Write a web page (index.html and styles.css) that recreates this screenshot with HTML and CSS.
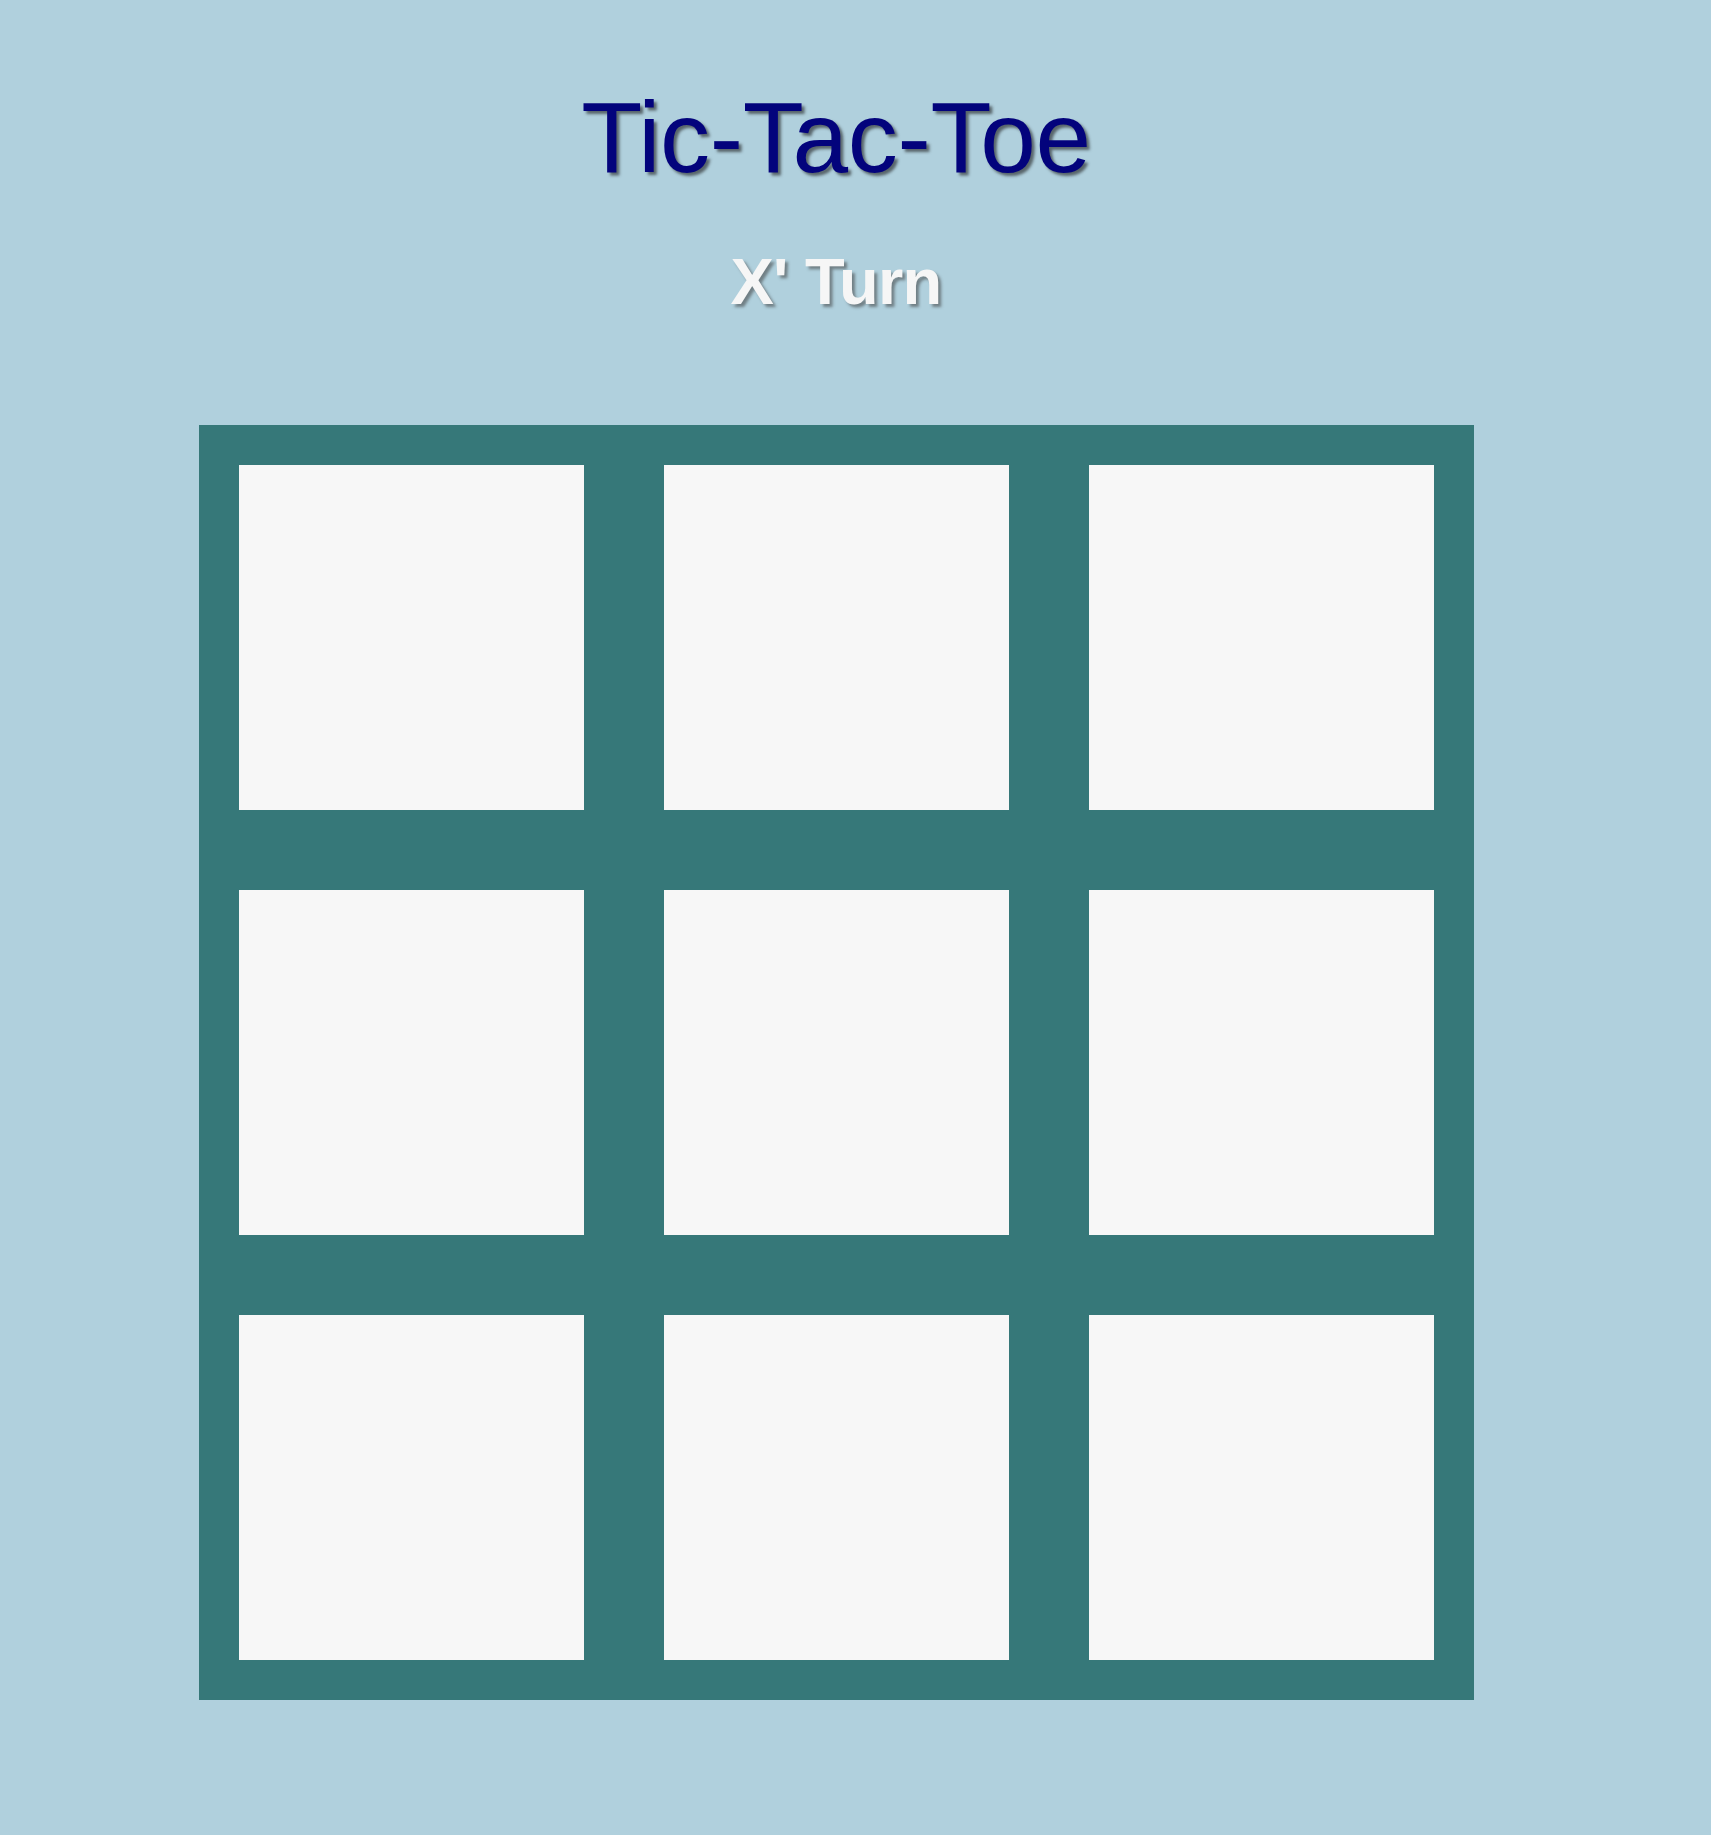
FILE: index.html
```html
<!DOCTYPE html>
<html lang="en">
<head>
<meta charset="utf-8">
<title>Tic-Tac-Toe</title>
<link rel="stylesheet" href="styles.css">
</head>
<body>
<main class="game">
  <h1 class="title">Tic-Tac-Toe</h1>
  <h2 class="turn">X' Turn</h2>
  <div class="board">
    <div class="cell"></div>
    <div class="cell"></div>
    <div class="cell"></div>
    <div class="cell"></div>
    <div class="cell"></div>
    <div class="cell"></div>
    <div class="cell"></div>
    <div class="cell"></div>
    <div class="cell"></div>
  </div>
</main>
</body>
</html>
```
FILE: styles.css
```css
html, body {
  margin: 0;
  padding: 0;
}
body {
  background: #b0d0dd;
  font-family: "Liberation Sans", Arial, Helvetica, sans-serif;
  min-height: 1835px;
}
.game {
  width: 1672px;
  display: flex;
  flex-direction: column;
  align-items: center;
  padding-top: 87px;
}
.title {
  margin: 0;
  font-size: 100px;
  line-height: 100px;
  font-weight: normal;
  letter-spacing: -0.3px;
  color: #03037c;
  text-shadow: 3px 3px 3px rgba(30, 30, 30, 0.6);
}
.turn {
  margin: 62px 0 0;
  font-size: 65px;
  line-height: 65px;
  font-weight: bold;
  letter-spacing: -0.8px;
  color: #f6f6f6;
  text-shadow: 3px 3px 3px rgba(60, 60, 60, 0.55);
}
.board {
  margin-top: 111px;
  display: grid;
  grid-template-columns: repeat(3, 345px);
  grid-template-rows: repeat(3, 345px);
  gap: 80px;
  padding: 40px;
  background: #367879;
}
.cell {
  background: #f7f7f7;
}
```
